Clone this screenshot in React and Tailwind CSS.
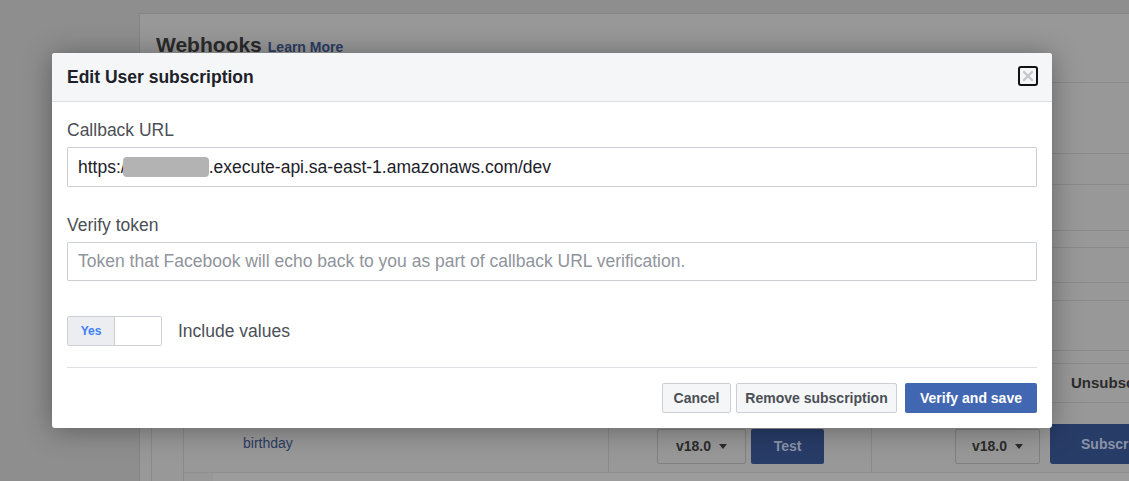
import React from 'react';

const font = { fontFamily: '"Liberation Sans", Arial, sans-serif' };

const BackgroundPage = () => {
  // rows of the dimmed table behind the dialog (heights in px)
  const rows = [71, 31, 46, 17, 35, 18, 50, 13];

  return (
    <div className="pl-[139px] pt-[13px] h-full">
      <div className="h-full border-l border-t border-[#858585] bg-[#989898]">
        <div className="h-[69px] border-b border-[#8a8a8a] pl-[16px] pt-[15px] flex items-baseline gap-[6px]">
          <span className="text-[21px] font-bold text-[#2b2b2b]">Webhooks</span>
          <span className="text-[14px] font-bold text-[#2c3d63]">Learn More</span>
        </div>
        <div className="ml-[11px] border-l border-[#8a8a8a] h-full">
          <div className="ml-[31px] border-l border-[#8a8a8a] h-full">
            {rows.map((h, i) => (
              <div key={i} style={{ height: h }} className="border-b border-[#8a8a8a]" />
            ))}
            <div className="h-[39px] border-b border-[#8a8a8a] flex justify-end">
              <div className="w-[80px] border-l border-[#8a8a8a] pl-[21px] flex items-center text-[15px] font-bold text-[#2b2b2b] whitespace-nowrap overflow-hidden">
                Unsubsc
              </div>
            </div>
            <div className="h-[70px] flex border-b border-[#8f8f8f]">
              <div className="w-[424px] shrink-0 pl-[59px] pt-[30px] text-[14px] text-[#2c3d63]">birthday</div>
              <div className="w-[263px] shrink-0 border-l border-[#8a8a8a] pl-[48px] pt-[26px] flex gap-[5px]">
                <div className="w-[89px] h-[35px] border border-[#808080] rounded-[2px] flex items-center justify-center gap-[8px] text-[14px] font-bold text-[#2b2b2b]">
                  v18.0
                  <span className="w-0 h-0 border-l-[4px] border-r-[4px] border-t-[5px] border-l-transparent border-r-transparent border-t-[#2b2b2b]" />
                </div>
                <div className="w-[73px] h-[35px] rounded-[2px] bg-[#283c68] flex items-center justify-center text-[14px] font-bold text-[#8a93a8]">
                  Test
                </div>
              </div>
              <div className="flex-1 min-w-0 overflow-hidden border-l border-[#8a8a8a] pl-[83px] pt-[26px] flex gap-[10px]">
                <div className="w-[85px] h-[35px] shrink-0 border border-[#808080] rounded-[2px] flex items-center justify-center gap-[8px] text-[14px] font-bold text-[#2b2b2b]">
                  v18.0
                  <span className="w-0 h-0 border-l-[4px] border-r-[4px] border-t-[5px] border-l-transparent border-r-transparent border-t-[#2b2b2b]" />
                </div>
                <div className="w-[110px] h-[40px] -mt-[5px] shrink-0 rounded-[3px] bg-[#283c68] pl-[31px] flex items-center text-[14px] font-bold text-[#8a93a8]">
                  Subscr
                </div>
              </div>
            </div>
            <div className="ml-[29px] h-[20px] bg-[#9c9c9c]" />
          </div>
        </div>
      </div>
    </div>
  );
};

const Dialog = () => (
  <div className="absolute left-[52px] top-[53px] w-[1000px] rounded-[3px] bg-white shadow-[0_2px_28px_rgba(0,0,0,0.35)] overflow-hidden">
    <div className="h-[49px] bg-[#f5f6f7] border-b border-[#dddfe2] pl-[15px] pr-[14px] flex items-center justify-between">
      <span className="text-[17.5px] font-bold text-[#1d2129]">Edit User subscription</span>
      <button className="w-[20px] h-[20px] mt-[-3px] border-2 border-[#111] rounded-[3px] flex items-center justify-center">
        <svg width="12" height="12" viewBox="0 0 12 12">
          <path d="M2 2 L10 10 M10 2 L2 10" stroke="#c4c6ca" strokeWidth="2.4" strokeLinecap="round" />
        </svg>
      </button>
    </div>
    <div className="px-[15px] pt-[18px] pb-[15px]">
      <div className="text-[17.5px] leading-[20px] text-[#4b4f56]">Callback URL</div>
      <div className="mt-[7px] h-[40px] border border-[#ccd0d5] rounded-[1px] pl-[10px] flex items-center text-[17.5px] text-[#1d2129] whitespace-nowrap">
        <span>https:/</span>
        <span className="w-[86px] h-[20px] -ml-[3px] rounded-[4px] bg-[#b3b3b3]" />
        <span>.execute-api.sa-east-1.amazonaws.com/dev</span>
      </div>
      <div className="mt-[28px] text-[17.5px] leading-[20px] text-[#4b4f56]">Verify token</div>
      <div className="mt-[7px] h-[39px] border border-[#ccd0d5] rounded-[1px] pl-[10px] flex items-center text-[17.5px] text-[#90949c] whitespace-nowrap">
        Token that Facebook will echo back to you as part of callback URL verification.
      </div>
      <div className="mt-[35px] flex items-center gap-[16px]">
        <div className="w-[95px] h-[30px] border border-[#ccd0d5] rounded-[2px] flex overflow-hidden">
          <div className="w-[47px] bg-[#ebedf0] border-r border-[#ccd0d5] flex items-center justify-center text-[12px] font-bold text-[#4080ff]">
            Yes
          </div>
          <div className="flex-1 bg-white" />
        </div>
        <span className="text-[17.5px] text-[#4b4f56]">Include values</span>
      </div>
      <div className="mt-[21px] border-t border-[#dddfe2]" />
      <div className="mt-[15px] flex justify-end">
        <button className="h-[30px] w-[69px] border border-[#ccd0d5] rounded-[2px] bg-[#f5f6f7] text-[14px] font-bold text-[#4b4f56]">
          Cancel
        </button>
        <button className="ml-[5px] h-[30px] w-[161px] border border-[#ccd0d5] rounded-[2px] bg-[#f5f6f7] text-[14px] font-bold text-[#4b4f56]">
          Remove subscription
        </button>
        <button className="ml-[8px] h-[30px] w-[132px] rounded-[2px] bg-[#4267b2] text-[14px] font-bold text-white">
          Verify and save
        </button>
      </div>
    </div>
  </div>
);

export default function App() {
  return (
    <div style={font} className="relative w-[1129px] h-[481px] overflow-hidden bg-[#8e8e8e]">
      <BackgroundPage />
      <Dialog />
    </div>
  );
}
